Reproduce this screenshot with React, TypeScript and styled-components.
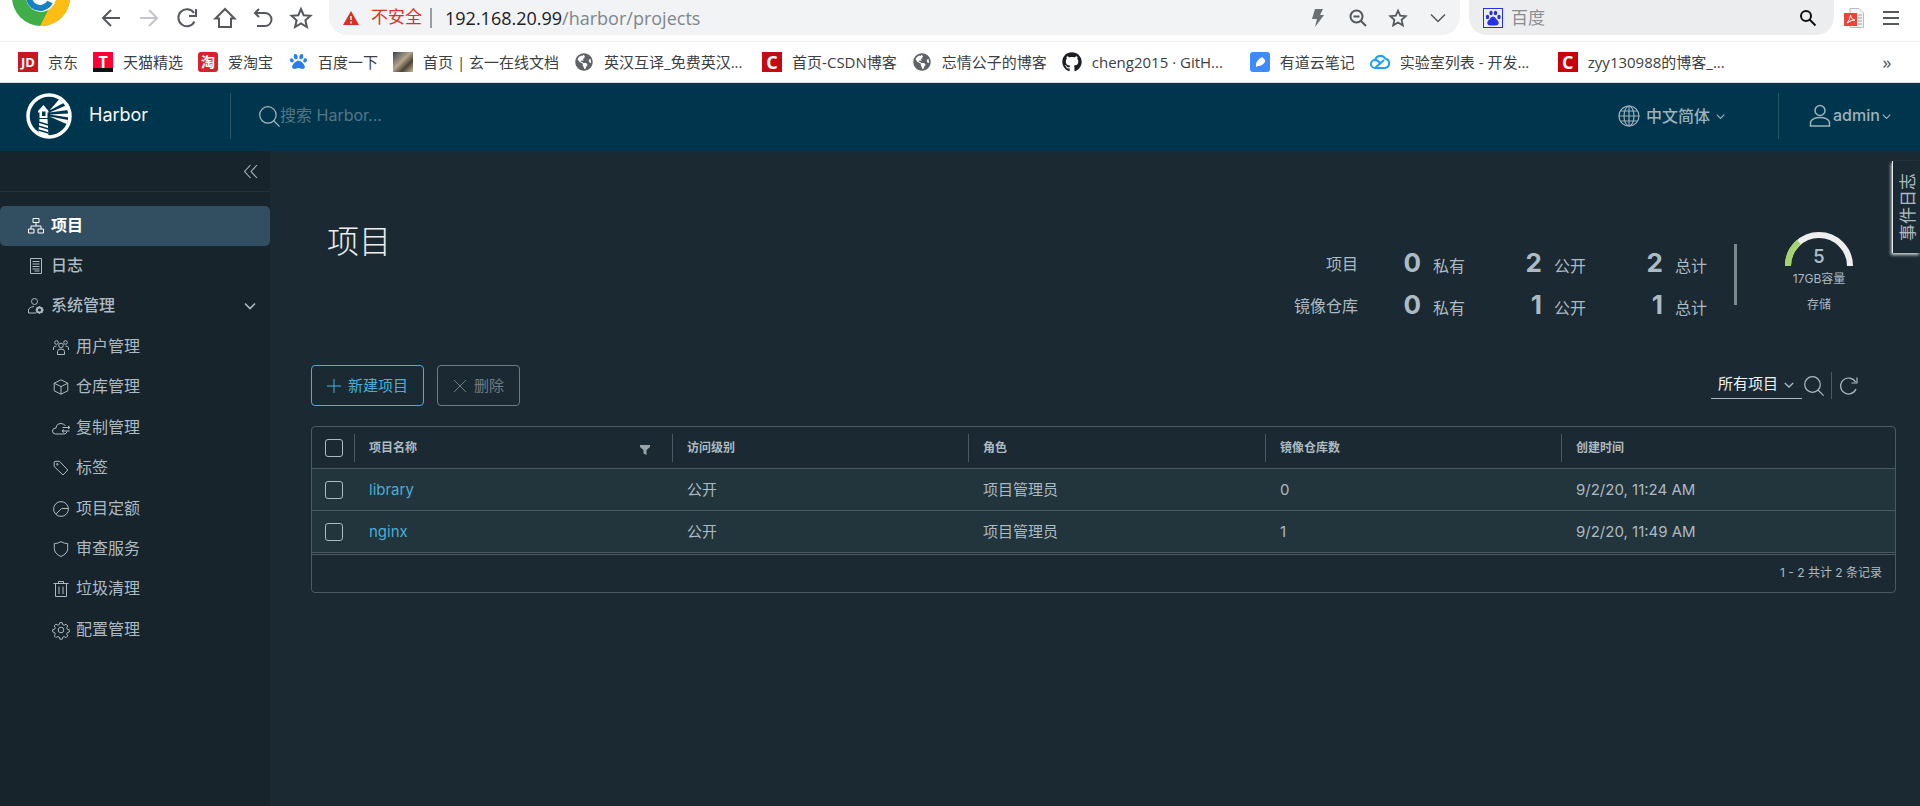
import React, { ReactNode } from 'react';
import styled, { createGlobalStyle } from 'styled-components';
import { FaGithub, FaPaw, FaGlobeAmericas } from 'react-icons/fa';

const ui = `'Open Sans', 'Noto Sans CJK SC', sans-serif`;
const app = `Inter, 'Noto Sans CJK SC', sans-serif`;

const Global = createGlobalStyle`
  * { box-sizing: border-box; }
  html, body, #root { height: 100%; }
  body { margin: 0; background: #1b2a32; font-family: ${app}; }
  button, input, select { font: inherit; color: inherit; }
  ul { list-style: none; margin: 0; padding: 0; }
  a { text-decoration: none; color: inherit; }
`;

const Page = styled.div`
  min-height: 100%;
  display: flex;
  flex-direction: column;
  overflow: hidden;
`;

/* ---------- icons ---------- */

const Svg = styled.svg<{ $s: number }>`
  width: ${p => p.$s}px;
  height: ${p => p.$s}px;
  flex: none;
  display: block;
  fill: none;
  stroke: currentColor;
  overflow: visible;
`;

const Icon = ({ s = 16, box = 16, w = 1, children }: { s?: number; box?: number; w?: number; children: ReactNode }) => (
  <Svg $s={s} viewBox={`0 0 ${box} ${box}`} strokeWidth={w} aria-hidden="true">{children}</Svg>
);

const Chevron = ({ s }: { s: number }) => <Icon s={s} box={12} w={1.6}><path d="M1 3.5l5 5 5-5" /></Icon>;
const Lens = ({ s, w = 1.2 }: { s: number; w?: number }) => (
  <Icon s={s} box={20} w={w}><circle cx="8.5" cy="8.5" r="7.8" /><path d="M14 14l5.6 5.6" /></Icon>
);

const ChromeLogo = () => (
  <Icon s={60} box={60}>
    <g stroke="none">
      <circle cx="30" cy="30" r="29" fill="#3fae49" />
      <path d="M30 30L55 15A29 29 0 0 1 29 59L42 34z" fill="#fdbd13" />
      <path d="M30 30L5 15A29 29 0 0 1 55 15z" fill="#e33b2e" />
      <circle cx="30" cy="30" r="15" fill="#fff" />
      <path d="M39 35A11 11 0 1 1 39 25" fill="none" stroke="#1682c4" strokeWidth="6" />
    </g>
  </Icon>
);

const HarborLogo = () => (
  <Icon s={46} box={46}>
    <circle cx="23" cy="23" r="21" fill="#00364d" stroke="#fff" strokeWidth="3.500" />
    <g stroke="none" fill="#fff">
      <path d="M12 18l5.500-6 5 6v1.500h-1V25h-8v-5.500H12z" />
      <path d="M13.500 26h8l1 17q-6 0-10-4z" />
      <path d="M23.500 17.500L33 6.500l4.500 3.500zM23.500 19.500L40 12.500l2 4.500zM23.500 21.500l19.500-1v4zM23.500 23.500l18.500 3.500-1.500 4z" />
      <path d="M16 18.500h3.500V23H16z" fill="#00364d" />
    </g>
    <path d="M12.500 29l10 3M12.500 33l10 3M12.500 37l10 3" stroke="#00364d" strokeWidth="1.400" />
  </Icon>
);

/* ---------- browser chrome ---------- */

const Toolbar = styled.div`
  height: 42px;
  background: #fff;
  border-bottom: 1px solid #ececee;
  display: flex;
  align-items: flex-start;
  padding-right: 12px;
  font-family: ${ui};
`;

const LogoSlot = styled.div`
  width: 92px;
  height: 42px;
  padding-left: 11px;
  display: flex;
  align-items: flex-end;
  padding-bottom: 15px;
`;

const NavButtons = styled.div`
  display: flex;
  width: 237px;
  height: 35px;
  align-items: center;
`;

const PlainButton = styled.button<{ $w?: number; $c?: string }>`
  width: ${p => p.$w ?? 38}px;
  height: 35px;
  padding: 0;
  border: 0;
  background: none;
  color: ${p => p.$c ?? '#55585c'};
  display: flex;
  align-items: center;
  justify-content: center;
`;

const Address = styled.div`
  flex: 1;
  height: 35px;
  background: #f1f3f4;
  border-radius: 0 0 18px 18px;
  display: flex;
  align-items: center;
  padding: 0 2px 0 14px;
`;

const Insecure = styled.span`
  color: #d93025;
  font-size: 17px;
  padding: 0 8px 0 12px;
  border-right: 2px solid #9a9da1;
  height: 20px;
  line-height: 18px;
`;

const Url = styled.div`
  flex: 1;
  padding-left: 13px;
  color: #80868b;
  font-size: 18px;
  line-height: 24px;
  b { font-weight: 400; color: #202124; }
`;

const SearchPill = styled.label`
  width: 365px;
  height: 35px;
  margin-left: 9px;
  background: #ecedef;
  border-radius: 0 0 18px 18px;
  display: flex;
  align-items: center;
  padding-left: 14px;
  color: #7b7e82;
`;

const PillInput = styled.input`
  flex: 1;
  min-width: 0;
  border: 0;
  background: none;
  outline: none;
  padding: 0 8px;
  font-size: 17px;
  &::placeholder { color: #8a8d91; opacity: 1; }
`;

const Bookmarks = styled.nav`
  height: 41px;
  background: #fff;
  border-bottom: 1px solid #dadce0;
  padding: 0 25px 1px 18px;
  display: flex;
  align-items: center;
  gap: 15px;
  font-family: ${ui};
  color: #3c4043;
`;

const Bookmark = styled.a<{ $wide?: boolean }>`
  display: flex;
  align-items: center;
  gap: 10px;
  font-size: 15px;
  line-height: 20px;
  white-space: nowrap;
  min-width: ${p => (p.$wide ? 173 : 0)}px;
`;

const Favicon = styled.span<{ $bg?: string; $c?: string; $size?: number; $r?: number }>`
  width: 20px;
  height: 20px;
  flex: none;
  display: flex;
  align-items: center;
  justify-content: center;
  background: ${p => p.$bg ?? 'transparent'};
  color: ${p => p.$c ?? '#fff'};
  border-radius: ${p => p.$r ?? 0}px;
  font-size: ${p => p.$size ?? 14}px;
  font-weight: 700;
  line-height: 20px;
`;

const More = styled(PlainButton)`
  margin-left: auto;
  font-size: 18px;
  width: 16px;
`;

/* ---------- harbor header ---------- */

const Label = styled.span`
  padding-bottom: 2px;
`;

const Header = styled.header`
  height: 68px;
  background: #00364d;
  color: #fafafa;
  display: flex;
  align-items: center;
  padding: 0 0 2px 26px;
`;

const Brand = styled.a`
  display: flex;
  align-items: center;
  gap: 17px;
  width: 204px;
  font-size: 18px;
  line-height: 24px;
`;

const HeaderSearch = styled.label`
  flex: 1;
  height: 46px;
  border-left: 1px solid #2a5365;
  padding-left: 28px;
  display: flex;
  align-items: center;
  color: #a5b8c1;
`;

const HeaderInput = styled.input`
  border: 0;
  outline: none;
  background: none;
  padding: 0 0 2px;
  width: 240px;
  font-size: 16px;
  &::placeholder { color: #557585; opacity: 1; }
`;

const HeaderMenu = styled.button<{ $w: number; $gap: number; $line?: boolean }>`
  width: ${p => p.$w}px;
  height: 46px;
  padding: 0 0 0 ${p => (p.$line ? 30 : 0)}px;
  border: 0;
  border-left: ${p => (p.$line ? '1px solid #2a5365' : '0')};
  background: none;
  color: #9cb1bb;
  display: flex;
  align-items: center;
  gap: ${p => p.$gap}px;
  font-size: 16px;
  font-weight: 500;
`;

/* ---------- sidebar ---------- */

const Body = styled.div`
  flex: 1;
  display: flex;
`;

const Sidebar = styled.nav`
  width: 270px;
  flex: none;
  background: #17242b;
  color: #acbac3;
`;

const Collapse = styled.div`
  height: 41px;
  border-bottom: 1px solid #25343c;
  display: flex;
  align-items: center;
  justify-content: flex-end;
  padding-right: 6px;
  margin-bottom: 14px;
`;

const NavItem = styled.a<{ $active?: boolean; $child?: boolean }>`
  height: 40px;
  display: flex;
  align-items: center;
  gap: 7px;
  padding: 0 14px 0 ${p => (p.$child ? 53 : 28)}px;
  border-radius: 5px;
  font-size: 16px;
  line-height: 24px;
  font-weight: ${p => (p.$active ? 700 : p.$child ? 400 : 500)};
  background: ${p => (p.$active ? '#324f62' : 'none')};
  color: ${p => (p.$active ? '#fff' : 'inherit')};
`;

const ChevronSlot = styled.span`
  margin-left: auto;
`;

const SubList = styled.ul`
  display: grid;
  min-height: 324px;
  padding-top: 1px;
`;

/* ---------- main ---------- */

const Main = styled.main`
  flex: 1;
  min-width: 0;
  color: #acbac3;
  padding: 54px 24px 0 41px;
  display: flex;
  flex-direction: column;
`;

const Top = styled.div`
  display: flex;
  justify-content: space-between;
  padding: 0 43px 0 16px;
`;

const Title = styled.h1`
  margin: 13px 0 0;
  font-size: 32px;
  line-height: 48px;
  font-weight: 300;
  color: #eee;
`;

const Stats = styled.div`
  display: flex;
  align-items: flex-start;
`;

const Summary = styled.dl`
  margin: 38px 27px 0 0;
  display: grid;
  grid-template-columns: 64px 107px 121px 121px;
  grid-auto-rows: 42px;
  font-size: 16px;
  line-height: 42px;
`;

const SummaryName = styled.dt`
  text-align: right;
`;

const Stat = styled.dd`
  margin: 0;
  display: flex;
  justify-content: flex-end;
  align-items: baseline;
  gap: 12px;
  line-height: 40px;
  strong { font-size: 26px; line-height: 40px; font-weight: 700; }
`;

const Divider = styled.div`
  width: 3px;
  height: 61px;
  margin-top: 39px;
  background: #7c888d;
`;

const Gauge = styled.div`
  width: 68px;
  margin: 27px 0 0 48px;
  display: grid;
  justify-items: center;
  font-size: 12px;
  line-height: 18px;
  svg, strong { grid-area: 1 / 1; }
  strong { font-size: 18px; line-height: 18px; font-weight: 600; align-self: end; }
`;

const GaugeSvg = styled.svg`
  width: 68px;
  height: 34px;
  fill: none;
  stroke-width: 6;
`;

const GaugeText = styled.span<{ $gap: number }>`
  margin-top: ${p => p.$gap}px;
`;

const EventTab = styled.button`
  position: absolute;
  right: 0;
  top: 161px;
  width: 28px;
  height: 92px;
  padding: 0 0 0 2px;
  border: 0;
  border-left: 1px solid #e8eaeb;
  background: #1b2a32;
  box-shadow: -1px 2px 3px #c9cfd2;
  color: #acbac3;
  font-size: 17px;
  line-height: 24px;
  display: flex;
  align-items: center;
  justify-content: center;
  span { writing-mode: vertical-rl; transform: rotate(180deg); text-orientation: sideways; }
`;

const Actions = styled.div`
  margin-top: 38px;
  display: flex;
  align-items: center;
  gap: 13px;
`;

const ActionButton = styled.button<{ $muted?: boolean }>`
  height: 41px;
  padding: 0 15px;
  border: 1px solid ${p => (p.$muted ? '#6f7b80' : '#49afd9')};
  border-radius: 4px;
  background: none;
  color: ${p => (p.$muted ? '#6f7b80' : '#49afd9')};
  font-size: 15px;
  line-height: 22px;
  display: flex;
  align-items: center;
  gap: 7px;
`;

const Tools = styled.div`
  margin: 0 38px 0 auto;
  display: flex;
  align-items: center;
`;

const SelectBox = styled.div`
  width: 91px;
  height: 27px;
  border-bottom: 1px solid #acbac3;
  display: flex;
  align-items: center;
  padding-right: 8px;
  margin-right: 2px;
`;

const Select = styled.select`
  appearance: none;
  flex: 1;
  min-width: 0;
  border: 0;
  outline: none;
  background: none;
  padding: 0 0 2px 7px;
  color: #f2f4f5;
  font-size: 15px;
  line-height: 22px;
`;

const ToolButton = styled.button<{ $line?: boolean }>`
  border: 0;
  border-left: ${p => (p.$line ? '1px solid #4b5c66' : '0')};
  background: none;
  padding: 0 0 0 ${p => (p.$line ? 8 : 0)}px;
  margin-left: ${p => (p.$line ? 7 : 0)}px;
  height: 27px;
  display: flex;
  align-items: center;
`;

const TableFrame = styled.section`
  margin-top: 20px;
  border: 1px solid #495a64;
  border-radius: 4px;
  overflow: hidden;
`;

const Table = styled.table`
  width: 100%;
  table-layout: fixed;
  border-collapse: separate;
  border-spacing: 0;
`;

const HeadCell = styled.th<{ $w?: number }>`
  height: 42px;
  width: ${p => (p.$w ? p.$w + 'px' : 'auto')};
  padding: 0;
  text-align: left;
  font-size: 12px;
  font-weight: 600;
  line-height: 20px;
  border-bottom: 1px solid #495a64;
`;

const HeadInner = styled.div<{ $line?: boolean }>`
  height: 28px;
  display: flex;
  justify-content: space-between;
  align-items: center;
  padding: 0 22px 0 14px;
  border-left: ${p => (p.$line ? '1px solid #495a64' : '0')};
  svg { margin-top: 4px; }
`;

const Cell = styled.td`
  height: 42px;
  padding: 0 0 0 15px;
  background: #22343c;
  border-bottom: 1px solid #495a64;
  font-size: 15px;
  line-height: 24px;
  a { color: #49afd9; }
`;

const CheckHead = styled(HeadCell)`
  padding-left: 13px;
`;

const CheckCell = styled(Cell)`
  padding-left: 13px;
`;

const Check = styled.input`
  appearance: none;
  display: block;
  width: 18px;
  height: 18px;
  margin: 0;
  border: 1px solid #acbac3;
  border-radius: 3px;
`;

const TableFoot = styled.footer`
  height: 38px;
  margin-top: 1px;
  border-top: 1px solid #495a64;
  padding: 0 13px 2px 0;
  display: flex;
  align-items: center;
  justify-content: flex-end;
  font-size: 12px;
  line-height: 20px;
`;

const bookmarks: { label: string; icon: ReactNode; wide?: boolean }[] = [
  { label: '京东', icon: <Favicon $bg="#c81623" $size={13}>JD</Favicon> },
  { label: '天猫精选', icon: <Favicon $bg="linear-gradient(#ff0036 80%, #111 80%)" $size={16}>T</Favicon> },
  { label: '爱淘宝', icon: <Favicon $bg="#d9202c" $r={3}>淘</Favicon> },
  { label: '百度一下', icon: <Favicon $c="#2b7de9" $size={17}><FaPaw /></Favicon> },
  { label: '首页 | 玄一在线文档', icon: <Favicon $bg="linear-gradient(135deg, #3b4247, #b3a48c 45%, #4b4434 70%, #c9b89a)" /> },
  { label: '英汉互译_免费英汉...', wide: true, icon: <Favicon $c="#5f6368" $size={18}><FaGlobeAmericas /></Favicon> },
  { label: '首页-CSDN博客', icon: <Favicon $bg="#c20c14" $size={18}>C</Favicon> },
  { label: '忘情公子的博客', icon: <Favicon $c="#5f6368" $size={18}><FaGlobeAmericas /></Favicon> },
  { label: 'cheng2015 · GitH...', wide: true, icon: <Favicon $c="#1b1f23" $size={20}><FaGithub /></Favicon> },
  {
    label: '有道云笔记',
    icon: <Favicon $bg="#3d8bff" $r={3}><Icon s={20} box={20}><path d="M6 15q-1-6 6-10 4 3 3 5-3 4-7 4z" fill="#fff" stroke="none" /></Icon></Favicon>,
  },
  {
    label: '实验室列表 - 开发...',
    wide: true,
    icon: <Favicon $c="#1ba0f2"><Icon s={20} box={20} w={2}><path d="M5 16a4 4 0 0 1 0-8 5.500 5.500 0 0 1 10-1.500 4.800 4.800 0 0 1 0 9.500zl9-8M5 8q3 0 6 4" /></Icon></Favicon>,
  },
  { label: 'zyy130988的博客_...', wide: true, icon: <Favicon $bg="#c9000b" $size={18}>C</Favicon> },
];

const children: { label: string; icon: ReactNode }[] = [
  { label: '用户管理', icon: <><circle cx="8" cy="6.500" r="2.300" /><circle cx="3.500" cy="3.500" r="1.800" /><circle cx="12.500" cy="3.500" r="1.800" /><path d="M4.500 15.500v-3q0-2.500 3.500-2.500t3.500 2.500v3zM.5 11V9q0-2 3-2M15.500 11V9q0-2-3-2" /></> },
  { label: '仓库管理', icon: <path d="M8 .8l6.800 3.400v7.600L8 15.200l-6.800-3.400V4.200zM1.200 4.200L8 7.600l6.800-3.400M8 7.600v7.600" /> },
  { label: '复制管理', icon: <><path d="M14 11.500q-.5 2.500-3 2.500H2.500Q-.5 14-.5 11t3.500-3q.5-4.500 5-4.500 3 0 4.500 2.500" /><path d="M9.500 7.500H17M15 6l2 1.500L15 9M16.500 11H9M11 9.500L9 11l2 1.500" /></> },
  { label: '标签', icon: <><path d="M1.200 2v4.500l8.800 8.500 4.800-5L6.500 1.300H2z" /><circle cx="4.300" cy="4.300" r=".8" /></> },
  { label: '项目定额', icon: <><circle cx="8" cy="8" r="7.400" /><path d="M15 7.500H8.500L3 13" /></> },
  { label: '审查服务', icon: <path d="M8 .6q3 2 6.700 2v5q0 5-6.700 7.900Q1.300 12.600 1.300 7.600v-5Q5 2.600 8 .6z" /> },
  { label: '垃圾清理', icon: <><path d="M2.500 3v12.500h11V3M.5 2.500h15M5.500 2V.5h5V2M6 5.500v7.500M10 5.500v7.500" /></> },
  { label: '配置管理', icon: <><circle cx="8" cy="8" r="2.800" /><path d="M6.800.6h2.400l.5 2 1.500.7 1.900-1.100 1.700 1.700-1.100 1.900.7 1.500 1.900.5v2.200l-1.900.6-.7 1.500 1.100 1.800-1.700 1.700-1.900-1-1.500.6-.5 2H6.800l-.5-2-1.500-.6-1.900 1-1.700-1.700 1.100-1.800-.7-1.500L-.3 9.900V7.700l1.900-.5.7-1.500-1.100-1.900 1.700-1.700 1.900 1.100 1.500-.7z" /></> },
];

const rows = [
  { name: 'library', access: '公开', role: '项目管理员', repos: '0', created: '9/2/20, 11:24 AM' },
  { name: 'nginx', access: '公开', role: '项目管理员', repos: '1', created: '9/2/20, 11:49 AM' },
];

const summary = [
  { name: '项目', values: ['0', '2', '2'] },
  { name: '镜像仓库', values: ['0', '1', '1'] },
];

export default function App() {
  return (
    <Page>
      <Global />
      <Toolbar>
        <LogoSlot><ChromeLogo /></LogoSlot>
        <NavButtons>
          <PlainButton aria-label="后退"><Icon s={20} box={20} w={2}><path d="M19 10H2M10 2l-8 8 8 8" /></Icon></PlainButton>
          <PlainButton aria-label="前进" $c="#c3c5c8"><Icon s={20} box={20} w={2}><path d="M1 10h17M10 2l8 8-8 8" /></Icon></PlainButton>
          <PlainButton aria-label="刷新"><Icon s={20} box={20} w={2}><path d="M17.500 13.500A8.500 8.500 0 1 1 17 5M19 1v7h-7" /></Icon></PlainButton>
          <PlainButton aria-label="主页"><Icon s={22} box={22} w={2}><path d="M1.500 11.500L11 2l9.500 9.500H17V20H5v-8.500z" /></Icon></PlainButton>
          <PlainButton aria-label="撤销"><Icon s={20} box={20} w={2}><path d="M6 1L2 5l4 4M2 5h10a6.500 6.500 0 0 1 0 13H4" /></Icon></PlainButton>
          <PlainButton aria-label="收藏"><Icon s={22} box={22} w={2}><path d="M11 2l2.700 6.200 6.700.6-5 4.500 1.500 6.700-5.900-3.500L5.100 20l1.500-6.700-5-4.500 6.700-.6z" /></Icon></PlainButton>
        </NavButtons>
        <Address>
          <Icon s={16} box={16}><path d="M8 1l8 14H0z" fill="#d93025" stroke="none" /><path d="M8 6v4M8 11.500v2" stroke="#fff" strokeWidth="1.500" /></Icon>
          <Insecure>不安全</Insecure>
          <Url><b>192.168.20.99</b>/harbor/projects</Url>
          <PlainButton $w={40} aria-label="加速"><Icon s={18} box={18}><path d="M6 0h8l-3 6h4L6 18l2-8H3z" fill="#6b6e72" stroke="none" /></Icon></PlainButton>
          <PlainButton $w={40} aria-label="缩小"><Icon s={18} box={18} w={2}><circle cx="7.500" cy="7.500" r="6" /><path d="M12 12l5 5M4.500 7.500h6" /></Icon></PlainButton>
          <PlainButton $w={40} aria-label="添加书签"><Icon s={18} box={22} w={2.200}><path d="M11 2l2.700 6.200 6.700.6-5 4.500 1.500 6.700-5.900-3.500L5.100 20l1.500-6.700-5-4.500 6.700-.6z" /></Icon></PlainButton>
          <PlainButton $w={40} aria-label="展开"><Icon s={14} box={12} w={1.300}><path d="M0 3l6 6 6-6" /></Icon></PlainButton>
        </Address>
        <SearchPill>
          <Favicon><Icon s={20} box={20}><rect x=".5" y=".5" width="19" height="19" stroke="#2632e0" /><g fill="#2632e0" stroke="none"><ellipse cx="4.500" cy="9" rx="1.700" ry="2.200" /><ellipse cx="8" cy="5" rx="1.700" ry="2.300" /><ellipse cx="12.500" cy="5" rx="1.700" ry="2.300" /><ellipse cx="16" cy="9" rx="1.700" ry="2.200" /><path d="M10 8.500q2 0 3.500 3 3 2 2 4.500-1 2-5.500 1.500Q5 18 4.500 16q-1-2.500 2-4.500 1.500-3 3.500-3z" /></g></Icon></Favicon>
          <PillInput placeholder="百度" aria-label="搜索" />
          <PlainButton $w={52} $c="#111" type="button" aria-label="搜索"><Icon s={16} box={16} w={2}><circle cx="6" cy="6" r="5" /><path d="M9.500 9.500l6 6" /></Icon></PlainButton>
        </SearchPill>
        <PlainButton $w={40} aria-label="PDF"><Icon s={20} box={20}><path d="M6 .5h9l4.500 4.500v14.500H6z" stroke="#b9bcbf" fill="#f7f7f7" /><path d="M14 7h4M14 10h4M14 13h4M14 16h4" stroke="#999" /><path d="M0 5h13v13H0z" fill="#ee4338" stroke="none" /><path d="M3 15q3-3 3.500-8 1 5 4.500 5-4 0-8 3" stroke="#fff" /></Icon></PlainButton>
        <PlainButton $w={34} aria-label="菜单"><Icon s={16} box={16} w={2}><path d="M0 2h16M0 8h16M0 14h16" /></Icon></PlainButton>
      </Toolbar>

      <Bookmarks aria-label="书签">
        {bookmarks.map(b => (
          <Bookmark href="#" key={b.label} $wide={b.wide}>{b.icon}{b.label}</Bookmark>
        ))}
        <More aria-label="更多书签">»</More>
      </Bookmarks>

      <Header>
        <Brand href="#"><HarborLogo /><Label>Harbor</Label></Brand>
        <HeaderSearch>
          <Lens s={21} />
          <HeaderInput placeholder="搜索 Harbor..." aria-label="搜索 Harbor" />
        </HeaderSearch>
        <HeaderMenu $w={160} $gap={6}>
          <Icon s={22} box={22} w={1.200}><circle cx="11" cy="11" r="10" /><ellipse cx="11" cy="11" rx="5" ry="10" /><path d="M11 1v20M1 11h20M2.500 6h17M2.500 16h17" /></Icon>
          <Label>中文简体</Label>
          <Chevron s={9} />
        </HeaderMenu>
        <HeaderMenu $w={142} $gap={2} $line>
          <Icon s={22} box={22} w={1.500}><circle cx="11" cy="5.500" r="5" /><path d="M1.500 21v-4q2-4.500 9.500-4.500t9.500 4.500v4z" /></Icon>
          <Label>admin</Label>
          <Chevron s={9} />
        </HeaderMenu>
      </Header>

      <Body>
        <Sidebar>
          <Collapse>
            <PlainButton $w={28} $c="#acbac3" aria-label="收起"><Icon s={13} box={12}><path d="M6 0L.5 6 6 12M12 0L6.500 6l5.500 6" /></Icon></PlainButton>
          </Collapse>
          <ul>
            <li><NavItem href="#" $active><Icon><path d="M5 .5h6v4H5zM.5 11h5.500v4H.5zM10 11h5.500v4H10zM8 4.500V8M3 11V8h10v3" /></Icon><Label>项目</Label></NavItem></li>
            <li><NavItem href="#"><Icon><path d="M2.500.5h11v15h-11zM4.500 3.500h7M4.500 6h7M4.500 8.500h7M4.500 11h7M6.500 13h5" /></Icon><Label>日志</Label></NavItem></li>
            <li>
              <NavItem href="#">
                <Icon><circle cx="6.500" cy="3.500" r="3" /><path d="M8 15H.5v-3Q1 9 6 8.500" /><circle cx="11.500" cy="12" r="2.600" strokeWidth="2" /><path d="M11.500 8v1.500M11.500 14.500V16M7.500 12H9M14 12h2M8.700 9.200l1 1M13.300 13.800l1 1M14.300 9.200l-1 1M9.700 13.800l-1 1" /></Icon>
                <Label>系统管理</Label>
                <ChevronSlot><Chevron s={12} /></ChevronSlot>
              </NavItem>
              <SubList>
                {children.map(c => (
                  <li key={c.label}><NavItem href="#" $child><Icon>{c.icon}</Icon><Label>{c.label}</Label></NavItem></li>
                ))}
              </SubList>
            </li>
          </ul>
        </Sidebar>

        <Main>
          <Top>
            <Title>项目</Title>
            <Stats>
              <Summary>
                {summary.map(s => (
                  <React.Fragment key={s.name}>
                    <SummaryName>{s.name}</SummaryName>
                    {['私有', '公开', '总计'].map((label, i) => (
                      <Stat key={label}><strong>{s.values[i]}</strong>{label}</Stat>
                    ))}
                  </React.Fragment>
                ))}
              </Summary>
              <Divider />
              <Gauge>
                <GaugeSvg viewBox="0 0 68 34" aria-hidden="true">
                  <path d="M3 34A31 31 0 0 1 65 34" stroke="#eee" />
                  <path d="M3 34A31 31 0 0 1 14 10" stroke="#a5d36f" />
                </GaugeSvg>
                <strong>5</strong>
                <GaugeText $gap={4}>17GB容量</GaugeText>
                <GaugeText $gap={8}>存储</GaugeText>
              </Gauge>
            </Stats>
          </Top>

          <Actions>
            <ActionButton><Icon s={14} box={14}><path d="M7 0v14M0 7h14" /></Icon>新建项目</ActionButton>
            <ActionButton $muted disabled><Icon s={14} box={14}><path d="M1 1l12 12M13 1L1 13" /></Icon>删除</ActionButton>
            <Tools>
              <SelectBox>
                <Select aria-label="项目筛选" defaultValue="all"><option value="all">所有项目</option></Select>
                <Chevron s={10} />
              </SelectBox>
              <ToolButton aria-label="搜索"><Lens s={20} /></ToolButton>
              <ToolButton $line aria-label="刷新"><Icon s={18} box={18} w={1.200}><path d="M16 12A8 8 0 1 1 15.500 5M17 .5v5.500h-5.500" /></Icon></ToolButton>
            </Tools>
          </Actions>

          <TableFrame>
            <Table>
              <thead>
                <tr>
                  <CheckHead $w={42}><Check type="checkbox" aria-label="全选" /></CheckHead>
                  <HeadCell $w={318}>
                    <HeadInner $line>项目名称<Icon s={10} box={10}><path d="M0 0h10v2L6.500 5v5l-3-1.500V5L0 2z" fill="#9aa4a8" stroke="none" /></Icon></HeadInner>
                  </HeadCell>
                  <HeadCell $w={296}><HeadInner $line>访问级别</HeadInner></HeadCell>
                  <HeadCell $w={297}><HeadInner $line>角色</HeadInner></HeadCell>
                  <HeadCell $w={296}><HeadInner $line>镜像仓库数</HeadInner></HeadCell>
                  <HeadCell><HeadInner $line>创建时间</HeadInner></HeadCell>
                </tr>
              </thead>
              <tbody>
                {rows.map(r => (
                  <tr key={r.name}>
                    <CheckCell><Check type="checkbox" aria-label={r.name} /></CheckCell>
                    <Cell><a href="#">{r.name}</a></Cell>
                    <Cell>{r.access}</Cell>
                    <Cell>{r.role}</Cell>
                    <Cell>{r.repos}</Cell>
                    <Cell>{r.created}</Cell>
                  </tr>
                ))}
              </tbody>
            </Table>
            <TableFoot>1 - 2 共计 2 条记录</TableFoot>
          </TableFrame>
        </Main>
      </Body>
      <EventTab><span>事件日志</span></EventTab>
    </Page>
  );
}
